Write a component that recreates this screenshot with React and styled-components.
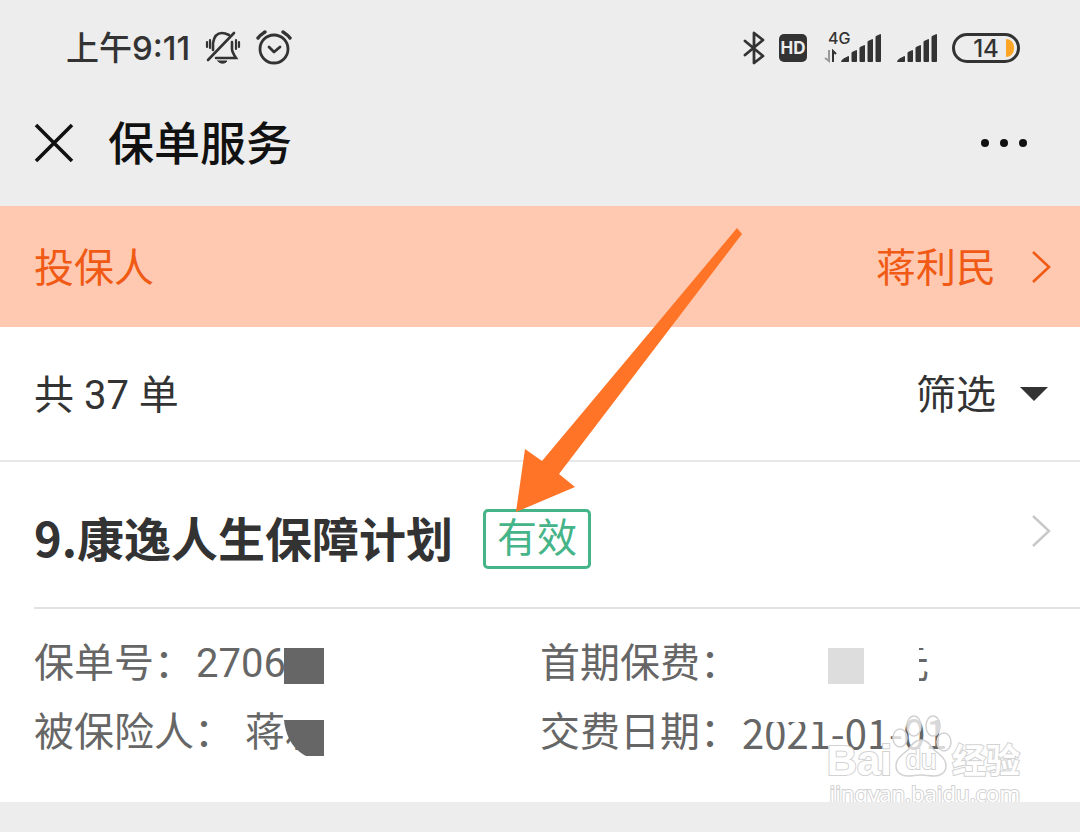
import React from "react";
import styled, { createGlobalStyle } from "styled-components";

const GlobalStyle = createGlobalStyle`
  * {
    box-sizing: border-box;
  }

  body {
    margin: 0;
    background: #ededed;
    color: #333;
    font-family: Roboto, "Noto Sans CJK SC", sans-serif;
    font-size: 40px;
  }

  button {
    padding: 0;
    border: 0;
    background: none;
    color: inherit;
    font: inherit;
    cursor: pointer;
  }
`;

function BellOffIcon() {
    return (
        <svg width="36" height="36" viewBox="0 0 36 36" fill="none" stroke="#333" strokeWidth="2.6" strokeLinecap="round" aria-hidden="true">
            <path d="M8 20V13C9 7 12 3 17 3c3 0 5 1 7 2" />
            <path d="M11 28h20c-2-3-4-6-4-9v-7" />
            <path d="M3 30L29 3" />
            <path d="M13 31h9c-2 3-7 3-9 0z" fill="#333" strokeWidth="1" />
            <path d="M2 12v5M5 10v8M31 10v9M34 12v5" strokeWidth="2.2" />
        </svg>
    );
}

function AlarmIcon() {
    return (
        <svg width="36" height="36" viewBox="0 0 36 36" fill="none" stroke="#333" strokeWidth="2.8" strokeLinecap="round" strokeLinejoin="round" aria-hidden="true">
            <circle cx="18" cy="19" r="14" />
            <path d="M13 17l5 5 6-5" />
            <path d="M2 8c2-3 4-4 7-6M27 2c3 2 5 3 7 6" strokeWidth="3.4" />
        </svg>
    );
}

function BluetoothIcon() {
    return (
        <svg width="22" height="36" viewBox="0 0 22 36" fill="none" stroke="#333" strokeWidth="2.8" strokeLinecap="round" strokeLinejoin="round" aria-hidden="true">
            <path d="M2 11l18 15-9 7V3l9 7L2 25" />
        </svg>
    );
}

function SignalIcon() {
    return (
        <svg width="42" height="30" viewBox="0 0 42 30" fill="#333" stroke="#333" strokeLinejoin="round" aria-hidden="true">
            <path d="M1.5 28.5q0-2 7-5v5z" />
            <path d="M12 19.500l4.500-2v11h-4.500z" />
            <path d="M20 14.500l4.500-2v16h-4.500z" />
            <path d="M28 8.500l4.500-2v22h-4.500z" />
            <path d="M36 3.500l4.500-2v27h-4.500z" />
        </svg>
    );
}

function DataArrows() {
    return (
        <svg width="16" height="14" viewBox="0 0 16 14" fill="none" strokeWidth="2" aria-hidden="true">
            <path d="M5 1v11L1 9" stroke="#999" />
            <path d="M9 13V2l3 3" stroke="#333" />
        </svg>
    );
}

function Chevron({ color, width }) {
    return (
        <svg width="20" height="34" viewBox="0 0 20 34" fill="none" stroke={color} strokeWidth={width} aria-hidden="true">
            <path d="M2 2l16 15L2 32" />
        </svg>
    );
}

function Watermark() {
    return (
        <Mark>
            <MarkLogo>
                <MarkText $size={42}>Bai</MarkText>
                <Paw>
                    <svg width="60" height="64" viewBox="0 0 60 64" fill="#fff" fillOpacity="0.75" stroke="#d2d2d2" strokeWidth="1.5" aria-hidden="true">
                        <ellipse cx="8" cy="24" rx="7" ry="9" />
                        <ellipse cx="22" cy="12" rx="7" ry="10" />
                        <ellipse cx="41" cy="12" rx="7" ry="10" />
                        <ellipse cx="52" cy="28" rx="7" ry="9" />
                        <path d="M29 26c6 0 9 4 12 9 6 5 13 9 13 17 0 7-6 10-12 10-5 0-8-1-13-1s-8 1-13 1c-6 0-12-3-12-10 0-8 7-12 13-17 3-5 6-9 12-9z" />
                    </svg>
                    <PawText>du</PawText>
                </Paw>
                <MarkText $size={34}>经验</MarkText>
            </MarkLogo>
            <MarkUrl>jingyan.baidu.com</MarkUrl>
        </Mark>
    );
}

export default function App() {
    return (
        <Page>
            <GlobalStyle />
            <StatusBar>
                <StatusGroup $gap={15}>
                    <Time>上午9:11</Time>
                    <BellOffIcon />
                    <AlarmIcon />
                </StatusGroup>
                <StatusGroup $gap={14}>
                    <BluetoothIcon />
                    <HdTag>HD</HdTag>
                    <Cellular>
                        <Network>
                            <NetworkType>4G</NetworkType>
                            <DataArrows />
                        </Network>
                        <SignalIcon />
                    </Cellular>
                    <SignalIcon />
                    <Battery>14</Battery>
                </StatusGroup>
            </StatusBar>

            <NavBar>
                <CloseButton aria-label="关闭">
                    <svg width="40" height="40" viewBox="0 0 40 40" stroke="#111" strokeWidth="3.6" aria-hidden="true">
                        <path d="M2 2l36 36M38 2L2 38" />
                    </svg>
                </CloseButton>
                <NavTitle>保单服务</NavTitle>
                <MoreButton aria-label="更多">
                    <svg width="48" height="10" viewBox="0 0 48 10" fill="#111" aria-hidden="true">
                        <circle cx="5" cy="5" r="4" />
                        <circle cx="24" cy="5" r="4" />
                        <circle cx="43" cy="5" r="4" />
                    </svg>
                </MoreButton>
            </NavBar>

            <HolderBar>
                <Label>投保人</Label>
                <HolderName>
                    <Label>蒋利民</Label>
                    <Chevron color="#f05a14" width="2.6" />
                </HolderName>
            </HolderBar>

            <FilterBar>
                <Label>共 37 单</Label>
                <FilterButton>
                    <Label>筛选</Label>
                    <svg width="28" height="14" viewBox="0 0 28 14" fill="#333" aria-hidden="true">
                        <path d="M0 0h28L14 14z" />
                    </svg>
                </FilterButton>
            </FilterBar>

            <Policy>
                <PolicyHead href="#policy">
                    <PolicyTitle>
                        <PolicyName>9.康逸人生保障计划</PolicyName>
                        <StateTag>有效</StateTag>
                    </PolicyTitle>
                    <Chevron color="#c8c8c8" width="2.4" />
                </PolicyHead>
                <Details>
                    <Detail>
                        <dt>保单号：</dt>
                        <Value>
                            2706
                            <MaskBlock />
                        </Value>
                    </Detail>
                    <Detail>
                        <dt>首期保费：</dt>
                        <Fee>
                            <FeeBlock />
                            <Unit>元</Unit>
                        </Fee>
                    </Detail>
                    <Detail>
                        <dt>被保险人：</dt>
                        <Insured>
                            蒋利
                            <NameMask width="46" height="50" viewBox="0 0 46 50" aria-hidden="true">
                                <path d="M0 0h46v50H22V10H0z" fill="#fff" />
                                <path d="M0 10h40v36H22C12 41 2 30 0 10z" fill="#666" />
                            </NameMask>
                        </Insured>
                    </Detail>
                    <Detail>
                        <dt>交费日期：</dt>
                        <PayDate>
                            2021-01-01
                            <DateMask />
                        </PayDate>
                    </Detail>
                </Details>
                <Watermark />
            </Policy>

            <Pointer width="230" height="290" viewBox="0 0 230 290" aria-hidden="true">
                <path d="M222 2L227 8L44 248L60 261L1 286L10 223L27 235z" fill="#ff7426" />
            </Pointer>
        </Page>
    );
}

const Page = styled.div`
  position: relative;
`;

/* the CJK face sits low in its line box, so the padding centres it */
const Label = styled.span`
  padding-bottom: 4px;
`;

const StatusBar = styled.div`
  display: flex;
  align-items: center;
  justify-content: space-between;
  height: 96px;
  padding: 0 60px 0 66px;
  color: #333;
  font-family: Inter, "Noto Sans CJK SC", sans-serif;
`;

const StatusGroup = styled.div`
  display: flex;
  align-items: center;
  gap: ${props => props.$gap}px;
`;

const Time = styled(Label)`
  font-size: 33px;
  font-weight: 500;
`;

const HdTag = styled.span`
  width: 28px;
  border-radius: 5px;
  background: #333;
  color: #ededed;
  font-size: 17px;
  font-weight: 700;
  line-height: 28px;
  text-align: center;
`;

const Cellular = styled.div`
  display: flex;
  align-items: center;
  margin-left: 3px;
`;

const Network = styled.span`
  display: flex;
  flex-direction: column;
  gap: 2px;
  width: 16px;
  padding-bottom: 4px;
`;

const NetworkType = styled.span`
  padding-left: 4px;
  font-size: 16px;
  font-weight: 500;
  line-height: 18px;
`;

const Battery = styled.span`
  position: relative;
  width: 68px;
  height: 30px;
  border: 3px solid #333;
  border-radius: 15px;
  font-size: 24px;
  font-weight: 500;
  line-height: 25px;
  text-align: center;

  &::after {
    content: "";
    position: absolute;
    top: 3px;
    right: 3px;
    width: 8px;
    height: 18px;
    border-radius: 0 8px 8px 0;
    background: #ffa526;
  }
`;

const NavBar = styled.header`
  display: flex;
  align-items: center;
  height: 110px;
  padding: 0 52px 16px 34px;
  color: #111;
`;

const CloseButton = styled.button`
  display: flex;
`;

const NavTitle = styled.h1`
  flex: 1;
  margin: 0 0 0 34px;
  padding-bottom: 6px;
  font-size: 46px;
  font-weight: 500;
`;

const MoreButton = styled.button`
  display: flex;
`;

const HolderBar = styled.div`
  display: flex;
  align-items: center;
  justify-content: space-between;
  height: 121px;
  padding: 0 29px 0 34px;
  background: #ffc9b1;
  color: #f05a14;
`;

const HolderName = styled.button`
  display: flex;
  align-items: center;
  gap: 35px;
`;

const FilterBar = styled.div`
  display: flex;
  align-items: center;
  justify-content: space-between;
  height: 135px;
  padding: 0 32px 0 34px;
  border-bottom: 2px solid #e8e8e8;
  background: #fff;
`;

const FilterButton = styled.button`
  display: flex;
  align-items: center;
  gap: 24px;
`;

const Policy = styled.section`
  position: relative;
  background: #fff;
`;

const PolicyHead = styled.a`
  display: flex;
  align-items: center;
  justify-content: space-between;
  height: 147px;
  margin-left: 34px;
  padding: 0 29px 8px 0;
  border-bottom: 2px solid #e2e2e2;
  color: #333;
  text-decoration: none;
`;

const PolicyTitle = styled.div`
  display: flex;
  align-items: center;
  gap: 30px;
  padding-top: 16px;
`;

const PolicyName = styled.h2`
  margin: 0;
  padding-bottom: 4px;
  font-family: "Noto Sans CJK SC", sans-serif;
  font-size: 47px;
  font-weight: 700;
  line-height: 56px;
`;

const StateTag = styled.span`
  padding: 0 11px;
  border: 3px solid #45b488;
  border-radius: 5px;
  color: #45b488;
  line-height: 54px;
`;

const Details = styled.dl`
  display: grid;
  grid-template-columns: 1fr 1fr;
  margin: 0;
  padding: 20px 34px 35px;
  color: #666;
  line-height: 69px;
`;

const Detail = styled.div`
  display: flex;
  gap: 2px;
`;

const Value = styled.dd`
  position: relative;
  margin: 0;
`;

const Insured = styled(Value)`
  margin-left: 9px;
`;

const PayDate = styled(Value)`
  font-family: "Noto Sans CJK SC", sans-serif;
`;

const MaskBlock = styled.span`
  position: absolute;
  top: 19px;
  left: 88px;
  width: 40px;
  height: 36px;
  background: #666;
`;

const Fee = styled(Value)`
  display: flex;
  align-items: center;
  gap: 55px;
  padding: 4px 0 0 86px;
`;

const FeeBlock = styled.span`
  width: 36px;
  height: 36px;
  background: #ddd;
`;

/* only the right edge of the character stays visible */
const Unit = styled.span`
  display: flex;
  justify-content: flex-end;
  width: 10px;
  height: 36px;
  overflow: hidden;
  line-height: 34px;
`;

const NameMask = styled.svg`
  position: absolute;
  top: 12px;
  left: 39px;
`;

const DateMask = styled.span`
  position: absolute;
  top: 12px;
  left: 23px;
  width: 62px;
  height: 12px;
  background: #fff;
`;

const Mark = styled.div`
  position: absolute;
  right: 60px;
  bottom: -6px;
  display: flex;
  flex-direction: column;
  align-items: flex-end;
`;

const MarkLogo = styled.div`
  display: flex;
  align-items: flex-end;
`;

const MarkText = styled.span`
  color: #fff;
  font-family: "Liberation Sans", "Noto Sans CJK SC", sans-serif;
  font-size: ${props => props.$size}px;
  font-weight: 700;
  line-height: 34px;
  -webkit-text-stroke: 2px #d2d2d2;
  paint-order: stroke fill;
`;

const MarkUrl = styled(MarkText).attrs({ $size: 22 })`
  font-family: "Noto Sans", sans-serif;
  font-weight: 400;
  line-height: 30px;
`;

const Paw = styled.span`
  position: relative;
  display: flex;
`;

const PawText = styled(MarkText).attrs({ $size: 28 })`
  position: absolute;
  right: 2px;
  bottom: 3px;
  left: 0;
  font-weight: 400;
  line-height: 30px;
  text-align: center;
`;

const Pointer = styled.svg`
  position: absolute;
  top: 226px;
  left: 515px;
  pointer-events: none;
`;
